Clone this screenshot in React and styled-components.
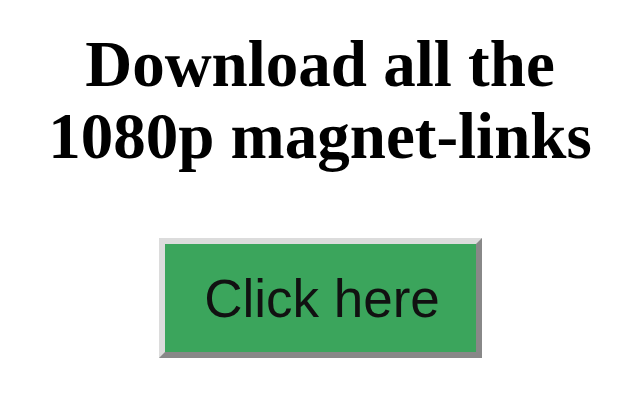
import styled, { createGlobalStyle } from "styled-components";

const Global = createGlobalStyle`
  html, body {
    margin: 0;
    background: #ffffff;
  }
`;

const Page = styled.main`
  width: 640px;
  height: 400px;
  display: flex;
  flex-direction: column;
  align-items: center;
  box-sizing: border-box;
  padding-top: 28px;
`;

const Title = styled.h1`
  margin: 0;
  font-family: "Liberation Serif", "Times New Roman", serif;
  font-weight: bold;
  font-size: 65px;
  line-height: 72px;
  color: #000;
  text-align: center;
`;

const Button = styled.button`
  margin-top: 66px;
  width: 323px;
  height: 120px;
  box-sizing: border-box;
  background: #3ba55c;
  border: 6px solid;
  border-color: #dcdcdc #888888 #888888 #dcdcdc;
  font-family: "Liberation Sans", Arial, sans-serif;
  font-size: 53px;
  color: #111111;
  padding: 0 0 0 4px;
  cursor: pointer;
`;

export default function App() {
  return (
    <>
      <Global />
      <Page>
        <Title>
          Download all the
          <br />
          1080p magnet-links
        </Title>
        <Button>Click here</Button>
      </Page>
    </>
  );
}
